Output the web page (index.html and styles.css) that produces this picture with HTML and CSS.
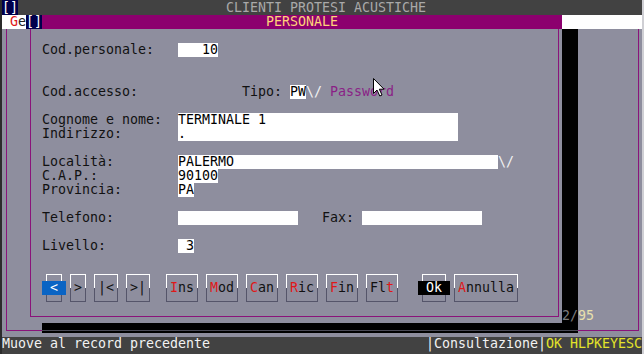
FILE: index.html
```
<!DOCTYPE html>
<html lang="it">
<head>
    <meta charset="UTF-8">
    <title>Clienti protesi acustiche - Personale</title>
    <link rel="stylesheet" href="styles.css">
</head>
<body>
    <div class="screen">
        <div class="titlebar">
            <span class="sysbox">[]</span><span class="apptitle">CLIENTI PROTESI ACUSTICHE</span>
        </div>

        <div class="desk">
            <div class="outer-title"><span class="menu"> <span class="hk">G</span>e</span></div>

            <div class="win">
                <div class="win-title">
                    <span class="sysbox">[]</span><span class="win-name">PERSONALE</span>
                </div>

                <div class="form">
                    <div class="row gap1">
                        <span class="lbl">Cod.personale:</span><span class="fld w5 right">10</span>
                    </div>

                    <div class="row gap2">
                        <span class="lbl">Cod.accesso:</span><span class="tipo">Tipo: </span><span class="fld">PW</span><span class="arrow">\/</span><span class="pass">Password</span>
                    </div>

                    <div class="row gap1">
                        <span class="lbl">Cognome e nome:</span><span class="fld w35">TERMINALE 1</span>
                    </div>
                    <div class="row">
                        <span class="lbl">Indirizzo:</span><span class="fld w35">.</span>
                    </div>

                    <div class="row gap1">
                        <span class="lbl">Località:</span><span class="fld w40">PALERMO</span><span class="arrow">\/</span>
                    </div>
                    <div class="row">
                        <span class="lbl">C.A.P.:</span><span class="fld w5">90100</span>
                    </div>
                    <div class="row">
                        <span class="lbl">Provincia:</span><span class="fld w2">PA</span>
                    </div>

                    <div class="row gap1">
                        <span class="lbl">Telefono:</span><span class="fld w15"></span><span class="fax">Fax: </span><span class="fld w15"></span>
                    </div>

                    <div class="row gap1">
                        <span class="lbl">Livello:</span><span class="fld w2 right">3</span>
                    </div>

                    <div class="buttons">
                        <span class="btn"><span class="sel">&lt;</span></span>
                        <span class="btn">&gt;</span>
                        <span class="btn">|&lt;</span>
                        <span class="btn">&gt;|</span>
                        <span class="btn sep"><span class="hk">I</span>ns</span>
                        <span class="btn"><span class="hk">M</span>od</span>
                        <span class="btn"><span class="hk">C</span>an</span>
                        <span class="btn"><span class="hk">R</span>ic</span>
                        <span class="btn"><span class="hk">F</span>in</span>
                        <span class="btn">Fl<span class="hk">t</span></span>
                        <span class="btn ok"><span class="sel dark">Ok</span></span>
                        <span class="btn"><span class="hk">A</span>nnulla</span>
                    </div>
                </div>
            </div>

            <div class="counter"><span class="dim">2/</span>95</div>

            <svg class="cursor" width="12" height="19" viewBox="0 0 12 19">
                <path d="M0.5 0.5 L0.5 15.5 L4 12 L6.8 18 L9 17 L6.3 11.2 L11 11.2 Z" fill="#fff" stroke="#000" stroke-width="1"/>
            </svg>
        </div>

        <div class="status">
            <span class="msg">Muove al record precedente</span>
            <span class="mode">|Consultazione|<span class="keys">OK HLPKEYESC</span></span>
        </div>
    </div>
</body>
</html>
```

FILE: styles.css
```
*{
    margin:0;
    padding:0;
    box-sizing:border-box;
}
html,body{
    height:100%;
}
body{
    background:linear-gradient(to right,#2b2b2b 2px,#cfcfd4 2px);
    font-family:"DejaVu Sans Mono",monospace;
    font-size:13.29px;
    line-height:14px;
    color:#111;
    overflow:hidden;
}
.screen{
    width:640px;
    height:354px;
    margin-left:2px;
    display:flex;
    flex-direction:column;
}
.screen span{
    white-space:pre;
}

/* top bar */
.titlebar{
    height:15px;
    padding-top:1px;
    background:#424242;
    color:#a9a9a9;
    display:flex;
}
.sysbox{
    display:inline-block;
    width:16px;
    background:#00004c;
    color:#fff;
}
.titlebar .sysbox{
    margin-top:-1px;
    height:15px;
    padding-top:1px;
}
.apptitle{
    padding-left:208px;
}

/* desktop + outer window */
.desk{
    flex:1;
    position:relative;
    background:#8e8e9e;
}
.desk::before{
    content:"";
    position:absolute;
    left:4px;
    right:3px;
    top:7px;
    bottom:6px;
    border:1px solid #8a137a;
}
/* outer frame line seen through the shadow */
.desk::after{
    content:"";
    position:absolute;
    left:40px;
    width:536px;
    top:315px;
    height:1px;
    background:#4a4a56;
}
.outer-title{
    position:relative;
    z-index:1;
    height:14px;
    background:#fff;
    color:#222;
}
.hk{
    color:#e01818;
}

/* inner window */
.win{
    position:absolute;
    left:24px;
    top:0;
    width:536px;
    height:308px;
    background:#8e8e9e;
    box-shadow:16px 10px 0 #000;
}
.win::before{
    content:"";
    position:absolute;
    left:4px;
    right:3px;
    top:7px;
    bottom:6px;
    border:1px solid #8a137a;
}
.win-title{
    position:relative;
    z-index:1;
    height:14px;
    display:flex;
    background:#8c006e;
}
.win-name{
    flex:1;
    text-align:center;
    color:#ffd27a;
}

.form{
    padding-left:16px;
}
.row{
    display:flex;
    height:14px;
}
.gap1{
    margin-top:14px;
}
.gap2{
    margin-top:28px;
}
.lbl{
    width:136px;
}
.fld{
    display:inline-block;
    height:14px;
    background:#fff;
    color:#000;
}
.right{
    text-align:right;
}
.w2{ width:16px; }
.w5{ width:40px; }
.w15{ width:120px; }
.w35{ width:280px; }
.w40{ width:320px; }

.tipo{
    margin-left:64px;
}
.arrow{
    color:#f2f2f2;
}
.pass{
    margin-left:8px;
    color:#8a1f86;
}
.fax{
    margin-left:24px;
}

/* buttons */
.buttons{
    display:flex;
    gap:8px;
    margin-top:21px;
    margin-left:4px;
}
.btn{
    display:inline-block;
    height:28px;
    padding:6px 3px;
    border:1px solid;
    border-image:linear-gradient(#fff 50%,#55556a 50%) 1;
    color:#111;
}
.btn.sep{
    margin-left:8px;
}
.btn.ok{
    margin-left:16px;
}
.sel{
    display:inline-block;
    vertical-align:top;
    margin:0 -8px;
    padding:0 8px;
    background:#0a64c4;
    color:#fff;
}
.sel.dark{
    background:#000;
}

.counter{
    position:absolute;
    z-index:2;
    left:560px;
    top:294px;
    color:#e8e0ac;
}
.counter .dim{
    color:#7c7c7c;
}
.cursor{
    position:absolute;
    z-index:2;
    left:371px;
    top:63px;
}

/* status line */
.status{
    height:17px;
    background:#424242;
    color:#f2f2f2;
    display:flex;
    justify-content:space-between;
}
.keys{
    color:#e4e42a;
}
```
